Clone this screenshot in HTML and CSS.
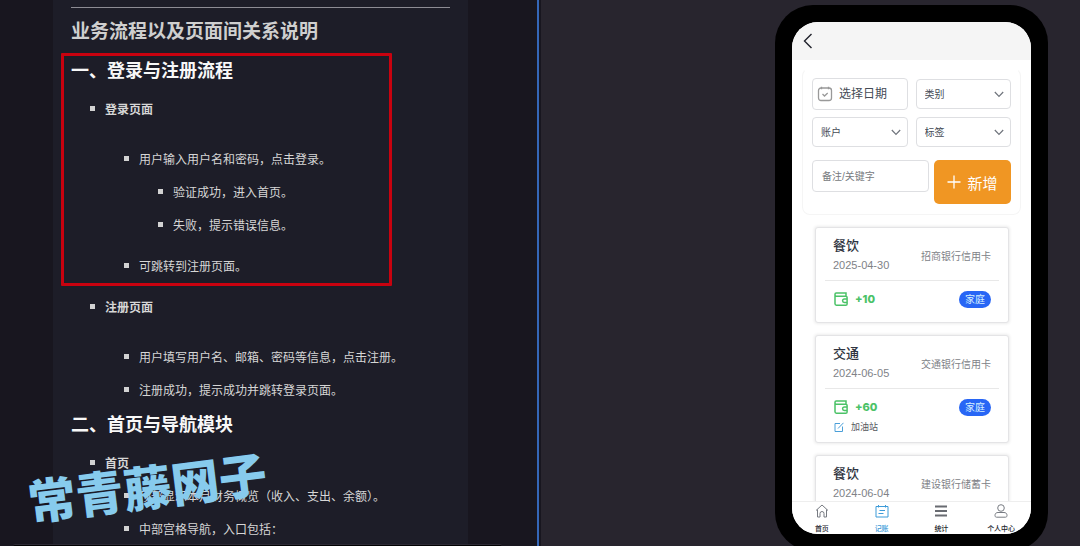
FILE: index.html
```html
<!DOCTYPE html>
<html lang="zh-CN">
<head>
<meta charset="utf-8">
<meta name="viewport" content="width=device-width, initial-scale=1">
<title>业务流程以及页面间关系说明</title>
<link rel="stylesheet" href="styles.css">
</head>
<body>
<svg class="sprite" aria-hidden="true">
  <symbol id="chevron" viewBox="0 0 10 7"><path d="M.8 1l4.200 4.400L9.200 1" fill="none" stroke="currentColor" stroke-width="1.200"/></symbol>
  <symbol id="wallet" viewBox="0 0 14 14"><path d="M1 2.500V11.800a1.400 1.400 0 0 0 1.400 1.400H11.800a1.300 1.300 0 0 0 1.300-1.300V5.500a1.300 1.300 0 0 0-1.300-1.300H2.300A1.200 1.200 0 0 1 1 3V2.200A1.200 1.200 0 0 1 2.200 1H12V4.200M13 7H10.300a1.700 1.700 0 0 0 0 3.400H13" fill="none" stroke="currentColor" stroke-width="1.500"/></symbol>
</svg>
<main class="workspace">
  <div class="doc-pane">
    <article class="doc">
      <hr class="doc-rule">
      <h1 class="doc-title">业务流程以及页面间关系说明</h1>
      <div class="highlight">
        <h2 class="doc-heading">一、登录与注册流程</h2>
        <ul class="doc-list">
          <li><strong>登录页面</strong>
            <ul class="doc-list spaced">
              <li>用户输入用户名和密码，点击登录。
                <ul class="doc-list deep">
                  <li>验证成功，进入首页。</li>
                  <li>失败，提示错误信息。</li>
                </ul>
              </li>
              <li>可跳转到注册页面。</li>
            </ul>
          </li>
        </ul>
      </div>
      <ul class="doc-list follow">
        <li><strong>注册页面</strong>
          <ul class="doc-list spaced">
            <li>用户填写用户名、邮箱、密码等信息，点击注册。</li>
            <li>注册成功，提示成功并跳转登录页面。</li>
          </ul>
        </li>
      </ul>
      <h2 class="doc-heading next">二、首页与导航模块</h2>
      <ul class="doc-list">
        <li><strong>首页</strong>
          <ul class="doc-list tight">
            <li>顶部显示本月财务概览（收入、支出、余额）。</li>
            <li>中部宫格导航，入口包括：</li>
          </ul>
        </li>
      </ul>
    </article>
    <div class="watermark">常青藤网子</div>
    <div class="dock-edge"></div>
  </div>
  <div class="preview-pane">
    <div class="phone">
      <div class="screen">
        <header class="topbar">
          <button class="back" aria-label="返回"><svg viewBox="0 0 10 16"><path d="M8.500 1L1.500 8l7 7" fill="none" stroke="currentColor" stroke-width="1.400"/></svg></button>
        </header>
        <div class="content">
          <form class="filters">
            <div class="field-grid">
              <label class="date-field">
                <svg viewBox="0 0 16 16" fill="none" stroke="currentColor" stroke-width="1.300"><rect x="1.500" y="2" width="13" height="12.500" rx="2.500"/><path d="M4.500 .8v2.400M11.500 .8v2.400M5.500 8l2 2 3.200-3"/></svg>
                <input type="text" placeholder="选择日期" aria-label="选择日期">
              </label>
              <label class="select-field"><select aria-label="类别"><option>类别</option></select><svg><use href="#chevron"/></svg></label>
              <label class="select-field"><select aria-label="账户"><option>账户</option></select><svg><use href="#chevron"/></svg></label>
              <label class="select-field"><select aria-label="标签"><option>标签</option></select><svg><use href="#chevron"/></svg></label>
            </div>
            <div class="search-row">
              <input class="keyword" type="text" placeholder="备注/关键字" aria-label="备注/关键字">
              <button class="add" type="button"><svg viewBox="0 0 14 14"><path d="M7 .5v13M.5 7h13" stroke="currentColor" stroke-width="1.300"/></svg>新增</button>
            </div>
          </form>
          <section class="records">
            <article class="record">
              <div class="record-head"><div><h3>餐饮</h3><time>2025-04-30</time></div><span class="bank">招商银行信用卡</span></div>
              <div class="record-body"><svg><use href="#wallet"/></svg><b class="amount">+10</b><span class="tag">家庭</span></div>
            </article>
            <article class="record">
              <div class="record-head"><div><h3>交通</h3><time>2024-06-05</time></div><span class="bank">交通银行信用卡</span></div>
              <div class="record-body"><svg><use href="#wallet"/></svg><b class="amount">+60</b><span class="tag">家庭</span></div>
              <p class="note"><svg viewBox="0 0 10 10" fill="none" stroke="currentColor"><path d="M6 1.500H1v8h7.500V4.500M4 6.500L9.500 .8"/></svg>加油站</p>
            </article>
            <article class="record">
              <div class="record-head"><div><h3>餐饮</h3><time>2024-06-04</time></div><span class="bank">建设银行储蓄卡</span></div>
            </article>
          </section>
        </div>
        <nav class="tabs">
          <a href="#home"><svg viewBox="0 0 14 14"><path d="M1 6.500L7 1l6 5.500M2.500 5.500V13H5V9.500a2 2 0 0 1 4 0V13h2.500V5.500"/></svg>首页</a>
          <a href="#book" class="active"><svg viewBox="0 0 14 14"><path d="M1 2.500h12v10.500H1zM3.500 1v2.500M10.500 1v2.500M4.500 6.500h5.500M3.500 9.500h5"/></svg>记账</a>
          <a href="#stats"><svg viewBox="0 0 14 14"><path class="bars" d="M1 2.500h12M1 7h12M1 11.500h12"/></svg>统计</a>
          <a href="#me"><svg viewBox="0 0 14 14"><circle cx="7" cy="4" r="3.300"/><path d="M4 8.500h6c2 0 3 1.200 3 3 0 1-.5 1.700-1.500 1.700h-9C1.500 13.200 1 12.500 1 11.500c0-1.800 1-3 3-3z"/></svg>个人中心</a>
        </nav>
      </div>
    </div>
  </div>
</main>
</body>
</html>
```

FILE: styles.css
```css
* { box-sizing: border-box; margin: 0; padding: 0; }

body {
  font-family: "Liberation Sans", "Noto Sans CJK SC", sans-serif;
  background: #18161f;
}

input, select, button { font-family: inherit; }

.sprite { position: absolute; width: 0; height: 0; }

.workspace {
  display: grid;
  grid-template-columns: 1fr 1fr;
  height: 100vh;
  overflow: hidden;
}

/* Document side */
.doc-pane {
  position: relative;
  margin-right: 1px;
  padding: 0 69px 0 53px;
  border-right: 2px solid #3567b8;
  overflow: hidden;
  min-height: 0;
}

.doc {
  min-height: 100%;
  padding: 7px 18px 0;
  background: #1d1d28;
  color: #d6d6d6;
  font-family: "Noto Sans CJK SC", sans-serif;
  font-size: 12px;
  line-height: 24px;
}

.doc-rule { border: 0; border-top: 1px solid #8d8c94; }
.doc-title { margin-top: 8px; font-size: 19px; line-height: 28px; color: #cfcfcf; }
.highlight { position: relative; margin-top: 13px; }

.highlight::after {
  content: "";
  position: absolute;
  inset: -4px 58px -8px -10px;
  border: 3px solid #c8020f;
  border-radius: 1px;
}

.doc-heading { margin-bottom: 16px; font-size: 18px; line-height: 24px; color: #f8f8f8; }
.doc-heading.next { margin-top: 9px; }

.doc-list { list-style: none; display: grid; gap: 9px; padding-left: 34px; }
.doc-list > li { position: relative; }
.doc-list > li::before {
  content: "";
  position: absolute;
  left: -15px;
  top: 9px;
  width: 5px;
  height: 5px;
  background: #d2d2d2;
}
.doc-list.spaced { margin-top: 26px; }
.doc-list.deep { margin: 9px 0 8px; }
.doc-list.tight { margin-top: 9px; }
.doc-list.follow { margin-top: 17px; }

.watermark {
  position: absolute;
  left: 27px;
  bottom: 25px;
  font-family: "Noto Sans CJK SC", sans-serif;
  font-size: 48px;
  font-weight: 900;
  line-height: 72px;
  color: #87cbed;
  transform: rotate(-7deg);
}

.dock-edge {
  position: absolute;
  left: 13px;
  right: 35px;
  bottom: 0;
  height: 2px;
  background: #020204;
  border-top: 1px solid #2d2a35;
  border-radius: 4px 4px 0 0;
}

/* Preview side */
.preview-pane {
  display: flex;
  justify-content: flex-end;
  margin-left: 1px;
  padding: 5px 32px 0 0;
  background: #28252e;
  min-height: 0;
}

.phone {
  flex: none;
  display: flex;
  width: 273px;
  height: 100vh;
  padding: 17px;
  border-radius: 38px;
  background: #000;
}

.screen {
  flex: 1;
  display: flex;
  flex-direction: column;
  overflow: hidden;
  border-radius: 26px;
  background: #fff;
  color: #303541;
}

.topbar { flex: none; display: flex; align-items: center; height: 38px; padding-left: 11px; background: #f5f5f5; }
.back { display: flex; border: 0; background: none; color: #20222c; }
.back svg { width: 10px; height: 16px; }

.content { flex: 1; min-height: 0; overflow: hidden; padding-top: 8px; }

.filters {
  margin: 0 10px;
  padding: 9px 9px 10px;
  border: 1px solid #f5f5f5;
  border-top-color: #fff;
  border-radius: 8px;
}

.field-grid { display: grid; grid-template-columns: 1fr 1fr; gap: 7px 8px; align-items: center; }
.date-field, .select-field, .keyword { border: 1px solid #dedfe2; border-radius: 4px; background: #fff; }
.date-field { display: flex; align-items: center; gap: 6px; height: 32px; padding: 0 4px; }
.date-field svg { flex: none; width: 16px; height: 16px; color: #999; }
.date-field input { width: 100%; min-width: 0; border: 0; outline: 0; font-size: 12px; background: none; }
.date-field input::placeholder { color: #454b55; }
.select-field { display: flex; align-items: center; height: 30px; padding: 0 6px 0 8px; }
.select-field select { flex: 1; min-width: 0; border: 0; appearance: none; background: none; font-size: 10px; color: #454b55; }
.select-field svg { width: 10px; height: 7px; color: #70757d; }

.search-row { display: flex; align-items: flex-start; gap: 5px; margin-top: 13px; }
.keyword { flex: 1; min-width: 0; height: 32px; padding: 0 9px; font-size: 10px; }
.keyword::placeholder { color: #777a80; }
.add {
  display: flex;
  align-items: center;
  justify-content: center;
  gap: 6px;
  width: 77px;
  height: 44px;
  border: 0;
  border-radius: 5px;
  background: #f09623;
  color: #fff;
  font-size: 15px;
}
.add svg { width: 14px; height: 14px; }

.records { display: grid; gap: 12px; padding: 12px 22px 0 23px; }
.record {
  padding: 8px 9px;
  border: 1px solid #e4e4e6;
  border-radius: 3px;
  background: #fff;
  box-shadow: 0 0 3px 1px #ededed;
}
.record-head {
  display: flex;
  align-items: center;
  justify-content: space-between;
  padding: 0 8px 6px;
  border-bottom: 1px solid #e8e8e8;
}
.record h3 { font-size: 13px; font-weight: 500; line-height: 20px; }
.record time { display: block; font-size: 11px; line-height: 18px; color: #808287; }
.bank { font-size: 10px; color: #808287; }
.record-body { display: flex; align-items: center; padding: 9px 8px 0 9px; color: #4bc267; }
.record-body svg { width: 14px; height: 14px; margin-right: 7px; }
.amount { font-family: Inter, sans-serif; font-size: 11px; font-weight: 800; line-height: 18px; }
.tag {
  margin-left: auto;
  padding: 0 6px;
  border-radius: 9px;
  background: #2866f5;
  color: #d3efff;
  font-size: 10px;
  line-height: 17px;
}
.note { display: flex; align-items: center; gap: 7px; padding: 4px 9px 0; font-size: 9px; line-height: 14px; color: #55585e; }
.note svg { width: 10px; height: 10px; color: #4a9fd8; }
.record:first-child { padding-bottom: 14px; }

.tabs { flex: none; display: grid; grid-template-columns: repeat(4, 1fr); height: 33px; border-top: 1px solid #eee; background: #fff; }
.tabs a {
  display: flex;
  flex-direction: column;
  align-items: center;
  gap: 6px;
  padding-top: 2px;
  color: #24262d;
  font-size: 7px;
  font-weight: 500;
  line-height: 10px;
  text-decoration: none;
  white-space: nowrap;
}
.tabs svg { width: 14px; height: 14px; fill: none; stroke: #777b82; }
.tabs .bars { stroke-width: 2; stroke: #686b71; }
.tabs .active { color: #3d9bd8; }
.tabs .active svg { stroke: #3d9bd8; }
```
